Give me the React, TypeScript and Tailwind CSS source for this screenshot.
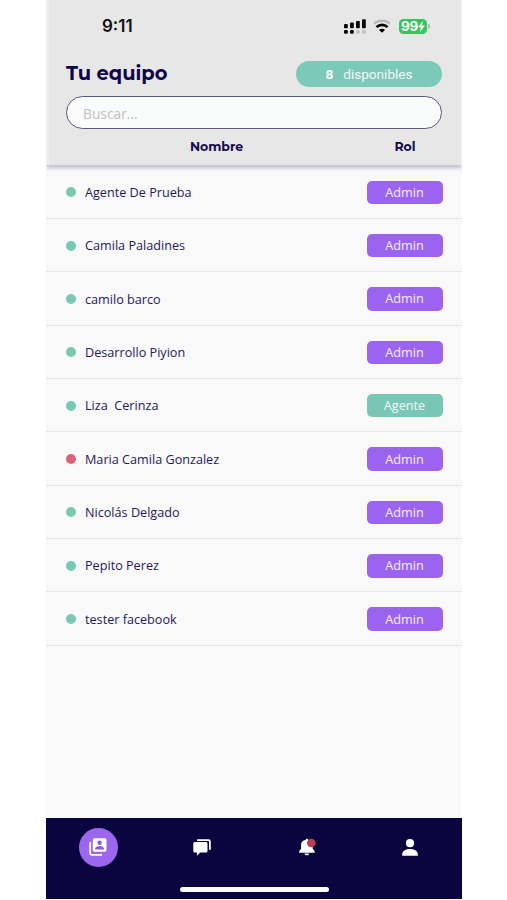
import React from "react";

type Member = { name: string; role: "Admin" | "Agente"; online: boolean };

const members: Member[] = [
  { name: "Agente De Prueba", role: "Admin", online: true },
  { name: "Camila Paladines", role: "Admin", online: true },
  { name: "camilo barco", role: "Admin", online: true },
  { name: "Desarrollo Piyion", role: "Admin", online: true },
  { name: "Liza  Cerinza", role: "Agente", online: true },
  { name: "Maria Camila Gonzalez", role: "Admin", online: false },
  { name: "Nicolás Delgado", role: "Admin", online: true },
  { name: "Pepito Perez", role: "Admin", online: true },
  { name: "tester facebook", role: "Admin", online: true },
];

function SignalIcon() {
  return (
    <svg width="22" height="15" viewBox="0 0 22 15" fill="#050505">
      <rect x="0" y="5" width="3.8" height="4.2" rx="1" />
      <rect x="6" y="3.5" width="3.8" height="5.7" rx="1" />
      <rect x="12" y="2" width="3.8" height="7.2" rx="1" />
      <rect x="18" y="0.2" width="3.8" height="9" rx="1" />
      <rect x="0" y="11" width="3.8" height="3.7" rx="1.2" />
      <rect x="6" y="11" width="3.8" height="3.7" rx="1.2" />
      <rect x="12" y="11" width="3.8" height="3.7" rx="1.2" fill="#c4c4c4" />
      <rect x="18" y="11" width="3.8" height="3.7" rx="1.2" fill="#c4c4c4" />
    </svg>
  );
}

function WifiIcon() {
  return (
    <svg width="18" height="14" viewBox="0 0 18 14" fill="none">
      <path d="M1.1 4.7C5.5.6 12.5.6 16.9 4.7" stroke="#b9b9b9" strokeWidth="2.3" />
      <path d="M3.5 8.1c3-2.9 8-2.9 11 0" stroke="#050505" strokeWidth="2.7" />
      <path d="M9 13.8 6 10.9c1.6-1.5 4.4-1.5 6 0Z" fill="#050505" />
    </svg>
  );
}

function StatusBar() {
  return (
    <div className="flex h-[52px] items-center pl-[53px] pr-[30px]">
      <span className="pt-[2px] text-[17px] font-semibold text-[#111]">9:11</span>
      <div className="ml-auto flex items-center">
        <SignalIcon />
        <span className="ml-[7px] flex"><WifiIcon /></span>
        <div className="ml-[8px] flex h-[15px] w-[28px] items-center justify-center rounded-[4.5px] bg-[#35c759] text-[13.5px] font-bold leading-[15px] tracking-[-0.3px] text-white">
          <span className="pt-px">99</span>
          <svg width="7" height="11" viewBox="0 0 7 11" fill="white">
            <path d="M5 0 0 6.3h2.9L2 11 7 4.5H4Z" />
          </svg>
        </div>
        <span className="ml-px h-[5px] w-[2px] rounded-r-full bg-[#b5b5b5]" />
      </div>
    </div>
  );
}

function TeamIcon() {
  return (
    <svg width="18" height="18" viewBox="0 0 18 18" fill="none">
      <path d="M1.2 4v11.2c0 .9.7 1.6 1.6 1.6H13" stroke="#fff" strokeWidth="1.7" />
      <rect x="3.8" y="0.3" width="13.7" height="13.5" rx="1.7" fill="#fff" />
      <circle cx="10.6" cy="4.8" r="2.2" fill="#8f57e6" />
      <path d="M6.2 11.4V10.6c0-1.7 2.5-2.6 4.4-2.6s4.4.9 4.4 2.6v.8Z" fill="#8f57e6" />
    </svg>
  );
}

function ChatIcon() {
  return (
    <svg width="18" height="17" viewBox="0 0 18 17" fill="none">
      <path d="M4.8 1.1h10.6c.9 0 1.5.6 1.5 1.5V10" stroke="#fff" strokeWidth="1.8" strokeLinecap="round" />
      <path d="M2 2.9h10.8c1 0 1.7.7 1.7 1.7v7.3c0 1-.7 1.7-1.7 1.7H7.2L4 16.8v-3.2H2c-1 0-1.7-.7-1.7-1.7V4.6c0-1 .7-1.7 1.7-1.7Z" fill="#fff" />
    </svg>
  );
}

function BellIcon() {
  return (
    <svg width="17" height="18" viewBox="0 0 17 18">
      <path d="M6.8 1.8C6.8.4 9 .4 9 1.8c3.3.5 4.7 2.5 4.7 5.2v3.8l1.9 2.3v1.7H.2v-1.7L2.1 10.8V7c0-2.7 1.4-4.7 4.7-5.2Z" fill="#fff" />
      <path d="M5.6 15.4H10c0 1-.8 1.8-2.2 1.8s-2.2-.8-2.2-1.8Z" fill="#fff" />
      <circle cx="12.3" cy="5" r="4.3" fill="#bd3f50" />
    </svg>
  );
}

function PersonIcon() {
  return (
    <svg width="16" height="17" viewBox="0 0 16 17" fill="#fff">
      <circle cx="8" cy="4.2" r="4.1" />
      <path d="M.2 16.7v-1.4c0-3.6 4.2-5.3 7.8-5.3s7.8 1.7 7.8 5.3v1.4Z" />
    </svg>
  );
}

export default function App() {
  return (
    <div className="flex h-[900px] w-full justify-center bg-white pb-px pl-px font-['Inter',sans-serif] text-[#15093f]">
      <main className="flex h-full w-[416px] shrink-0 flex-col overflow-hidden bg-[#f9f9fa]">
        <header className="z-10 h-[165px] shrink-0 border-l-[3px] border-r-2 border-[#eeeeee] bg-[#e7e7e7] shadow-[0_3px_4px_rgba(20,10,90,0.25)]">
          <StatusBar />
          <div className="flex h-11 items-center justify-between pl-[17px] pr-[18px]">
            <h1 className="text-[19.4px] font-bold leading-none text-[#10064b] font-['Montserrat','Inter',sans-serif]">Tu equipo</h1>
            <div className="flex h-[26px] w-[146px] items-center justify-center gap-[10px] rounded-full bg-[#7bc9b8] font-['Roboto',sans-serif] text-[13.6px] text-white">
              <span className="font-bold">8</span>
              <span className="opacity-90">disponibles</span>
            </div>
          </div>
          <div className="pl-[17px] pr-[18px]">
            <input
              aria-label="Buscar"
              placeholder="Buscar..."
              className="block h-[33px] w-full rounded-full border-[1.5px] border-[#5d567f] bg-[#fafbfb] px-[16px] pt-px font-['Open_Sans',sans-serif] text-[13.8px] font-medium outline-none placeholder:text-[#c0c0c0]"
            />
          </div>
          <div className="flex h-[35px] items-center pl-[17px] pr-[17px] pt-px text-center text-[12.5px] font-bold leading-none text-[#160b4e] font-['Montserrat','Inter',sans-serif]">
            <span className="flex-1">Nombre</span>
            <span className="w-[76px]">Rol</span>
          </div>
        </header>

        <ul className="flex-1 pt-[0.6px] font-['Open_Sans',sans-serif] text-[12.65px]">
          {members.map((member) => (
            <li key={member.name} className="flex h-[53.37px] items-center border-b border-[#e5e6e8] pl-[19.5px] pr-[19.5px] pt-px">
              <span className={`size-[10px] shrink-0 rounded-full ${member.online ? "bg-[#78c9b1]" : "bg-[#df627c]"}`} />
              <span className="ml-[9.5px] whitespace-pre text-[#261a58]">{member.name}</span>
              <span className={`ml-auto flex h-[23.5px] w-[76px] items-center justify-center rounded-[5px] text-white/90 ${member.role === "Admin" ? "bg-[#9c63f0]" : "bg-[#78c7b6]"}`}>
                {member.role}
              </span>
            </li>
          ))}
        </ul>

        <nav className="h-[81px] shrink-0 bg-[#0a053f]">
          <div className="grid h-[58px] grid-cols-4 place-items-center">
            <span className="flex size-[39px] items-center justify-center rounded-full bg-[#9c66ee]"><TeamIcon /></span>
            <ChatIcon />
            <span className="pl-[2px]"><BellIcon /></span>
            <PersonIcon />
          </div>
          <div className="flex justify-center pt-[11px]">
            <div className="h-[5px] w-[149px] rounded-full bg-white" />
          </div>
        </nav>
      </main>
    </div>
  );
}
